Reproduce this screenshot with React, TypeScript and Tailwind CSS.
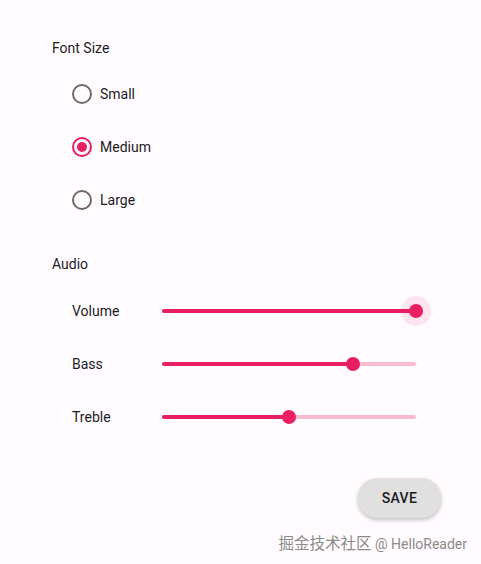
import React from 'react';

const FONT_OPTIONS = ['Small', 'Medium', 'Large'];
const SLIDERS = [
  { label: 'Volume', value: 1, active: true },
  { label: 'Bass', value: 0.75, active: false },
  { label: 'Treble', value: 0.5, active: false },
];

function Radio({ checked }: { checked: boolean }) {
  return (
    <span
      className={`flex items-center justify-center w-5 h-5 rounded-full border-2 ${
        checked ? 'border-[#e91e63]' : 'border-[#6b6b6b]'
      }`}
    >
      {checked && <span className="w-[10px] h-[10px] rounded-full bg-[#e91e63]" />}
    </span>
  );
}

function Slider({ value, active }: { value: number; active: boolean }) {
  return (
    <div className="relative w-[254px] h-1">
      <div className="absolute inset-0 rounded-full bg-[#f8bbd0]" />
      <div className="absolute left-0 top-0 h-1 rounded-full bg-[#e91e63]" style={{ width: `${value * 100}%` }} />
      <div
        className="absolute top-1/2 -translate-x-1/2 -translate-y-1/2 flex items-center justify-center"
        style={{ left: `${value * 100}%` }}
      >
        {active && <div className="absolute w-[30px] h-[30px] rounded-full bg-[#e91e63]/10" />}
        <div className="relative w-[14px] h-[14px] rounded-full bg-[#e91e63]" />
      </div>
    </div>
  );
}

export default function App() {
  return (
    <div className="relative w-[481px] h-[564px] bg-[#fffbfe] text-[#1c1b1f] font-['Roboto',sans-serif] text-[14px]">
      <div className="flex flex-col pl-[52px] pt-[38px] pr-[40px]">
        <h2 className="h-5 leading-5">Font Size</h2>

        <div className="mt-[9px] flex flex-col pl-5">
          {FONT_OPTIONS.map(opt => (
            <div key={opt} className="h-[53px] flex items-center gap-2">
              <Radio checked={opt === 'Medium'} />
              <span className="leading-5">{opt}</span>
            </div>
          ))}
        </div>

        <h2 className="mt-[28px] h-5 leading-5">Audio</h2>

        <div className="mt-[10px] flex flex-col pl-5">
          {SLIDERS.map(s => (
            <div key={s.label} className="h-[53px] flex items-center">
              <span className="w-[90px] leading-5">{s.label}</span>
              <Slider value={s.value} active={s.active} />
            </div>
          ))}
        </div>

        <div className="mt-[35px] flex justify-end">
          <button className="w-[83px] h-10 rounded-full bg-[#e0e0e0] shadow-[0_2px_4px_rgba(0,0,0,0.25)] text-[14px] font-medium tracking-wide text-[#1c1b1f]">
            SAVE
          </button>
        </div>
      </div>

      <span className="absolute right-[14px] top-[532px] leading-5 text-[#8a8a8a] [text-shadow:0_0_2px_#fff]">
        <span className="text-[15.5px] font-['Noto_Sans_CJK_SC',sans-serif]">掘金技术社区</span>
        <span className="text-[14px] font-['Roboto',sans-serif]"> @ HelloReader</span>
      </span>
    </div>
  );
}
